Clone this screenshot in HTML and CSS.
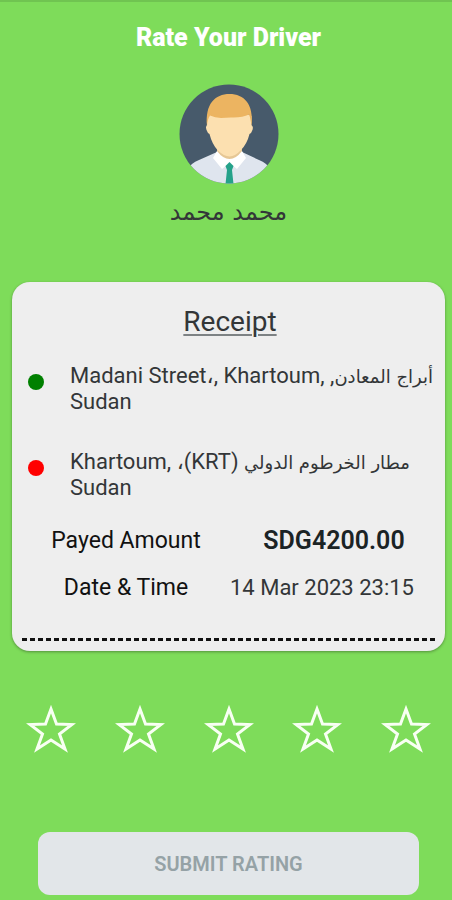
FILE: index.html
```html
<!DOCTYPE html>
<html lang="en">
<head>
<meta charset="utf-8">
<meta name="viewport" content="width=device-width, initial-scale=1">
<title>Rate Your Driver</title>
<link rel="stylesheet" href="styles.css">
</head>
<body>
<main class="screen">
  <h1 class="title">Rate Your Driver</h1>

  <section class="driver">
    <svg class="avatar" viewBox="0 0 100 100" role="img" aria-label="Driver">
      <defs><clipPath id="disc"><circle cx="50" cy="50" r="49.5"/></clipPath></defs>
      <g clip-path="url(#disc)">
        <rect width="100" height="100" fill="#475a6b"/>
        <path d="M8 86Q12 79 20 76L38 68H63L80 76Q88 79 92 86V100H8Z" fill="#dfe5ee"/>
        <path d="M38 60H63V70L50.500 80L38 70Z" fill="#e6c795"/>
        <path d="M28 32V41Q26 43 28 47Q29 50 30.500 50Q33 60 38.500 66Q45 72.500 50.500 72.500Q56 72.500 62 66Q68 60 70.500 50Q72 50 73 47Q75 43 72.500 41V32L50 20Z" fill="#fce0b0"/>
        <path d="M28 42C26 20 36 10 50.500 10C65 10 75 20 72.500 42Q71.500 34 70 30.500Q63 34 52 33.500L42 34Q36 33.500 31 31.500Q28.500 35 28 42Z" fill="#ecb461"/>
        <path d="M38 67L34 74L43 85L50.500 79L58 85L67 74L63 67Q57 75 50.500 75Q44 75 38 67Z" fill="#fff"/>
        <path d="M50.500 78L54.500 82L53 86L54.500 100H46.500L48 86L46.500 82Z" fill="#25a28a"/>
      </g>
    </svg>
    <p class="driver-name arabic" lang="ar" dir="rtl">محمد محمد</p>
  </section>

  <section class="receipt">
    <h2 class="receipt-title">Receipt</h2>
    <ul class="stops">
      <li class="stop">
        <span class="dot pickup"></span>
        <p class="address" dir="rtl"><span class="arabic">أبراج المعادن</span>, Madani Street،, Khartoum, Sudan</p>
      </li>
      <li class="stop">
        <span class="dot dropoff"></span>
        <p class="address" dir="rtl"><span class="arabic">مطار الخرطوم الدولي</span> (KRT)، Khartoum, Sudan</p>
      </li>
    </ul>
    <dl class="details">
      <dt>Payed Amount</dt>
      <dd class="amount">SDG4200.00</dd>
      <dt>Date &amp; Time</dt>
      <dd class="date">14 Mar 2023 23:15</dd>
    </dl>
    <div class="tear"></div>
  </section>

  <svg class="shapes" aria-hidden="true">
    <symbol id="star" viewBox="0 0 50 50">
      <path d="M25 5L30.500 20L46 20.500L33.500 30L39 45L25 36L11 45L16.500 30L4 20.500L19.500 20Z" fill="none" stroke="#f8fff3" stroke-width="3"/>
    </symbol>
  </svg>
  <div class="stars" role="group" aria-label="Rating">
    <button class="star" type="button" aria-label="1 star"><svg><use href="#star"/></svg></button>
    <button class="star" type="button" aria-label="2 stars"><svg><use href="#star"/></svg></button>
    <button class="star" type="button" aria-label="3 stars"><svg><use href="#star"/></svg></button>
    <button class="star" type="button" aria-label="4 stars"><svg><use href="#star"/></svg></button>
    <button class="star" type="button" aria-label="5 stars"><svg><use href="#star"/></svg></button>
  </div>

  <button class="submit" type="button" disabled>SUBMIT RATING</button>
</main>
</body>
</html>
```
FILE: styles.css
```css
* {
  box-sizing: border-box;
  margin: 0;
  padding: 0;
}

body {
  background: #7edc5a;
  color: #333638;
  font-family: Roboto, "DejaVu Sans", sans-serif;
}

.screen {
  display: flex;
  flex-direction: column;
  border-top: 2px solid #70c451;
  padding-bottom: 5px;
}

.title {
  margin-top: 20px;
  padding-left: 5px;
  color: #fff;
  font-size: 25px;
  font-weight: 900;
  line-height: 32px;
  text-align: center;
}

.driver {
  display: flex;
  flex-direction: column;
  align-items: center;
  gap: 12px;
  margin-top: 30px;
  padding-left: 5px;
}

.avatar {
  width: 100px;
  height: 100px;
}

.driver-name {
  font-size: 24px;
  line-height: 32px;
}

.arabic {
  font-family: "DejaVu Sans", sans-serif;
}

.receipt {
  margin: 54px 7px 0 12px;
  padding: 22px 7px 10px 10px;
  border-radius: 18px;
  background: #eee;
  box-shadow: 0 1px 3px rgba(0, 0, 0, 0.35);
}

.receipt-title {
  font-size: 28px;
  font-weight: 400;
  line-height: 36px;
  text-align: center;
  text-decoration: underline #7d8284;
  text-decoration-thickness: 2px;
  text-underline-offset: 3px;
}

.stops {
  display: flex;
  flex-direction: column;
  gap: 34px;
  margin-top: 23px;
  list-style: none;
}

.stop {
  display: flex;
  gap: 26px;
  padding-left: 6px;
}

.dot {
  flex: none;
  width: 16px;
  height: 16px;
  margin-top: 11px;
  border-radius: 50%;
}

.pickup {
  background: #008000;
}

.dropoff {
  background: #f00;
}

.address {
  flex: 1;
  font-size: 22px;
  line-height: 26px;
  text-align: left;
}

.address .arabic {
  font-size: 18px;
  line-height: 1;
}

.details {
  display: grid;
  grid-template-columns: repeat(2, minmax(0, 1fr));
  align-items: center;
  margin-top: 16px;
  font-size: 23px;
  line-height: 47px;
  text-align: center;
  white-space: nowrap;
}

.details dt {
  color: #111;
}

.details .amount {
  color: #1b2325;
  font-size: 25px;
  font-weight: 600;
}

.details .date {
  padding-right: 24px;
  font-size: 22px;
}

.tear {
  height: 3px;
  margin-top: 27px;
  background: repeating-linear-gradient(to right, #111 0 5px, transparent 5px 8px);
}

.shapes {
  position: absolute;
  width: 0;
  height: 0;
}

.stars {
  display: flex;
  justify-content: space-between;
  margin-top: 53px;
  padding: 0 21px 0 26px;
}

.star {
  width: 50px;
  height: 50px;
  border: 0;
  background: none;
}

.star svg {
  display: block;
  width: 50px;
  height: 50px;
}

.submit {
  height: 63px;
  margin: 78px 33px 0 38px;
  border: 0;
  border-radius: 12px;
  background: #e2e6e9;
  color: #95a2a6;
  font: 600 20px Roboto, sans-serif;
}
```
